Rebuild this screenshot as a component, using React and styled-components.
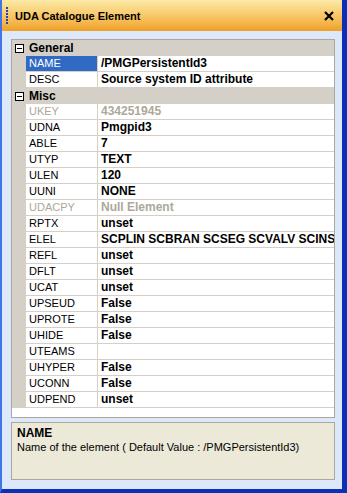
import React from 'react';
import styled, { createGlobalStyle } from 'styled-components';

const GlobalStyle = createGlobalStyle`
  html, body {
    margin: 0;
    padding: 0;
    background: #ffffff;
  }
  * {
    box-sizing: border-box;
  }
`;

const Window = styled.div`
  width: 347px;
  height: 493px;
  display: flex;
  flex-direction: column;
  background: #dde8fa;
  border-left: 2px solid #3f75e6;
  border-right: 5px solid #0a2fb8;
  border-bottom: 4px solid #0a2fb8;
  font-family: "Liberation Sans", Arial, sans-serif;
  font-size: 11px;
  color: #000;
`;

const TitleBar = styled.div`
  height: 31px;
  flex: none;
  display: flex;
  align-items: center;
  padding: 0 6px 0 4px;
  background: linear-gradient(to bottom, #fdeaa8 0%, #f9d27a 35%, #f4b54a 75%, #ef9f26 100%);
`;

const Grip = styled.div`
  width: 3px;
  height: 18px;
  margin-right: 6px;
  background-image: linear-gradient(to bottom, #2148b8 0, #2148b8 2px, transparent 2px);
  background-size: 2px 3px;
  background-repeat: repeat-y;
`;

const Title = styled.div`
  flex: 1;
  font-weight: bold;
  font-size: 11px;
  color: #000;
`;

const CloseButton = styled.div`
  width: 10px;
  height: 10px;
  display: flex;
  margin-right: 2px;
`;

const Body = styled.div`
  flex: 1;
  display: flex;
  flex-direction: column;
  padding: 8px 7px 9px 9px;
`;

const Grid = styled.div`
  height: 379px;
  flex: none;
  background: #ffffff;
  border: 1px solid #aca899;
  overflow: hidden;
`;

const Row = styled.div`
  display: flex;
  height: 16px;
  background: ${(p) => (p.category ? '#d4d0c8' : '#ffffff')};
`;

const Margin = styled.div`
  width: 14px;
  flex: none;
  background: #d4d0c8;
  display: flex;
  align-items: center;
  justify-content: center;
`;

const ToggleBox = styled.div`
  width: 9px;
  height: 9px;
  border: 1px solid #000;
  background: #fff;
  display: flex;
  align-items: center;
  justify-content: center;
  &::after {
    content: '';
    width: 5px;
    height: 1px;
    background: #000;
  }
`;

const CategoryLabel = styled.div`
  padding-left: 3px;
  font-weight: bold;
  font-size: 12px;
  line-height: 16px;
`;

const NameCell = styled.div`
  width: 72px;
  flex: none;
  border-right: 1px solid #d4d0c8;
  border-bottom: 1px solid #d4d0c8;
  padding-left: 3px;
  line-height: 15px;
  white-space: nowrap;
  overflow: hidden;
  background: ${(p) => (p.selected ? '#316ac5' : 'transparent')};
  color: ${(p) => (p.selected ? '#ffffff' : p.disabled ? '#aca899' : '#000')};
`;

const ValueCell = styled.div`
  flex: 1;
  min-width: 0;
  border-bottom: 1px solid #d4d0c8;
  padding-left: 3px;
  line-height: 15px;
  font-size: 12px;
  font-weight: bold;
  white-space: nowrap;
  overflow: hidden;
  color: ${(p) => (p.disabled ? '#aca899' : '#000')};
`;

const Description = styled.div`
  height: 58px;
  flex: none;
  margin-top: 4px;
  background: #ece9d8;
  border: 1px solid #aca899;
  padding: 3px 5px;
  line-height: 14px;
`;

const DescTitle = styled.div`
  font-weight: bold;
  font-size: 12px;
`;

const groups = [
  {
    name: 'General',
    rows: [
      ['NAME', '/PMGPersistentId3', { selected: true }],
      ['DESC', 'Source system ID attribute'],
    ],
  },
  {
    name: 'Misc',
    rows: [
      ['UKEY', '434251945', { disabled: true }],
      ['UDNA', 'Pmgpid3'],
      ['ABLE', '7'],
      ['UTYP', 'TEXT'],
      ['ULEN', '120'],
      ['UUNI', 'NONE'],
      ['UDACPY', 'Null Element', { disabled: true }],
      ['RPTX', 'unset'],
      ['ELEL', 'SCPLIN SCBRAN SCSEG SCVALV SCINS'],
      ['REFL', 'unset'],
      ['DFLT', 'unset'],
      ['UCAT', 'unset'],
      ['UPSEUD', 'False'],
      ['UPROTE', 'False'],
      ['UHIDE', 'False'],
      ['UTEAMS', ''],
      ['UHYPER', 'False'],
      ['UCONN', 'False'],
      ['UDPEND', 'unset'],
    ],
  },
];

export default function App() {
  return (
    <>
      <GlobalStyle />
      <Window>
        <TitleBar>
          <Grip />
          <Title>UDA Catalogue Element</Title>
          <CloseButton>
            <svg width="10" height="10" viewBox="0 0 10 10">
              <path d="M1 1 L9 9 M9 1 L1 9" stroke="#000" strokeWidth="2.2" />
            </svg>
          </CloseButton>
        </TitleBar>
        <Body>
          <Grid>
            {groups.map((g) => (
              <React.Fragment key={g.name}>
                <Row category>
                  <Margin>
                    <ToggleBox />
                  </Margin>
                  <CategoryLabel>{g.name}</CategoryLabel>
                </Row>
                {g.rows.map(([name, value, opts = {}]) => (
                  <Row key={name}>
                    <Margin />
                    <NameCell selected={opts.selected} disabled={opts.disabled}>
                      {name}
                    </NameCell>
                    <ValueCell disabled={opts.disabled}>{value}</ValueCell>
                  </Row>
                ))}
              </React.Fragment>
            ))}
          </Grid>
          <Description>
            <DescTitle>NAME</DescTitle>
            <div>Name of the element ( Default Value : /PMGPersistentId3)</div>
          </Description>
        </Body>
      </Window>
    </>
  );
}
